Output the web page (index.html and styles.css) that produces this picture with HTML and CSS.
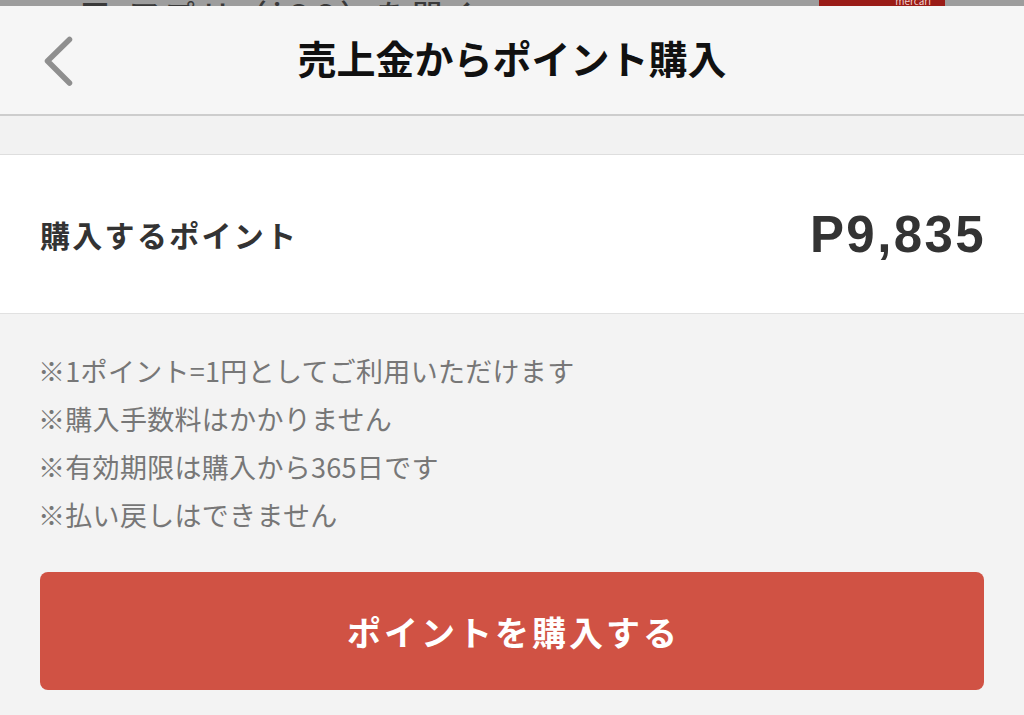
FILE: index.html
```html
<!DOCTYPE html>
<html lang="ja">
<head>
<meta charset="utf-8">
<title>売上金からポイント購入</title>
<link rel="stylesheet" href="styles.css">
</head>
<body>
<div class="topstrip">
  <div class="topstrip-inner">
    <span class="topstrip-text">■ アプリ（iOS）を開く</span>
    <span class="topstrip-badge">mercari</span>
  </div>
</div>
<header class="navbar">
  <a class="back" href="#" aria-label="戻る">
    <svg width="40" height="64" viewBox="0 0 40 64"><path d="M29.5 9.5 L7.5 31 L29.5 53" fill="none" stroke="#8f8f8f" stroke-width="5.5" stroke-linecap="round" stroke-linejoin="round"/></svg>
  </a>
  <h1 class="title">売上金からポイント購入</h1>
</header>
<div class="spacer"></div>
<section class="row">
  <span class="row-label">購入するポイント</span>
  <span class="row-value">P9,835</span>
</section>
<ul class="notes">
  <li>※1ポイント=1円としてご利用いただけます</li>
  <li>※購入手数料はかかりません</li>
  <li>※有効期限は購入から365日です</li>
  <li>※払い戻しはできません</li>
</ul>
<div class="actions">
  <button class="buy">ポイントを購入する</button>
</div>
</body>
</html>
```
FILE: styles.css
```css
html, body {
  margin: 0;
  padding: 0;
}
body {
  background: #f3f3f3;
  font-family: "Noto Sans CJK JP", "Noto Sans", sans-serif;
  width: 1024px;
  height: 715px;
  overflow: hidden;
}
.topstrip {
  height: 6px;
  background: #9d9d9d;
  overflow: hidden;
}
.topstrip-inner {
  display: flex;
  align-items: flex-end;
  height: 6px;
}
.topstrip-text {
  margin-left: 80px;
  font-size: 30px;
  line-height: 30px;
  margin-bottom: -22px;
  color: #3a3a3a;
  letter-spacing: 6px;
  font-weight: 500;
}
.topstrip-badge {
  margin-left: auto;
  margin-right: 79px;
  width: 126px;
  height: 6px;
  background: #9a1c17;
  color: #f0d0ce;
  font-size: 10px;
  line-height: 10px;
  text-align: right;
  box-sizing: border-box;
  padding-right: 14px;
  margin-top: -6px;
  display: flex;
  align-items: flex-end;
  justify-content: flex-end;
}
.navbar {
  height: 108px;
  background: #f6f6f6;
  border-bottom: 2px solid #cdcdcd;
  display: flex;
  align-items: center;
  justify-content: center;
  position: relative;
}
.back {
  position: absolute;
  left: 40px;
  top: 24px;
  display: block;
  width: 40px;
  height: 64px;
}
.title {
  margin: -7px 0 0 0;
  font-size: 39px;
  font-weight: 700;
  letter-spacing: 0;
  color: #111;
}
.spacer {
  height: 38px;
  background: #f2f2f2;
  border-bottom: 1px solid #dedede;
}
.row {
  height: 158px;
  background: #fff;
  border-bottom: 1px solid #e1e1e1;
  display: flex;
  align-items: center;
  justify-content: space-between;
  padding: 0 40px;
}
.row-label {
  font-size: 30px;
  font-weight: 700;
  color: #333;
  letter-spacing: 2.3px;
}
.row-value {
  font-family: "Liberation Sans", Arial, sans-serif;
  font-weight: 700;
  font-size: 51px;
  letter-spacing: 2.4px;
  color: #333;
  margin-right: -2px;
}
.notes {
  list-style: none;
  margin: 0;
  padding: 33px 38px 0;
}
.notes li {
  font-size: 27px;
  line-height: 48px;
  color: #777;
  letter-spacing: 0.3px;
}
.actions {
  padding: 33px 40px 0;
}
.buy {
  display: block;
  width: 100%;
  height: 118px;
  border: 0;
  border-radius: 8px;
  background: #d05244;
  color: #fff;
  font-family: "Noto Sans CJK JP", "Noto Sans", sans-serif;
  font-size: 34px;
  font-weight: 700;
  letter-spacing: 3px;
  padding: 0 0 0 3px;
}
```
